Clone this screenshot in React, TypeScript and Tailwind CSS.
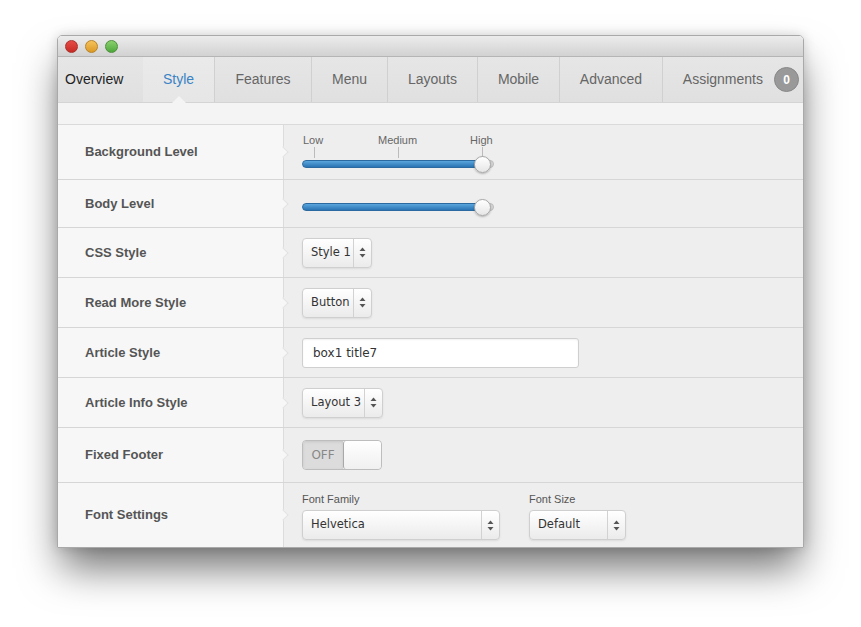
import React from "react";

const font = { fontFamily: '"Liberation Sans", Arial, Helvetica, sans-serif' };
const lucida = { fontFamily: '"DejaVu Sans", "Liberation Sans", sans-serif' };

const tabs = [
  { name: "Overview", w: "w-[85px]" },
  { name: "Style", w: "w-[71px]" },
  { name: "Features", w: "w-[97px]" },
  { name: "Menu", w: "w-[76px]" },
  { name: "Layouts", w: "w-[90px]" },
  { name: "Mobile", w: "w-[82px]" },
  { name: "Advanced", w: "w-[103px]" },
];

const Arrows = () => (
  <div className="flex w-[18px] self-stretch items-center justify-center border-l border-[#d2d2d2]">
    <svg width="7" height="11" viewBox="0 0 7 11">
      <path d="M3.5 0.5 L6.5 4 L0.5 4 Z" fill="#555" />
      <path d="M3.5 10.5 L6.5 7 L0.5 7 Z" fill="#555" />
    </svg>
  </div>
);

const Select = ({ value, w }: { value: string; w: string }) => (
  <div
    className={`flex items-center h-[30px] ${w} rounded-[4px] border border-[#cfcfcf] bg-gradient-to-b from-white to-[#ebebeb] shadow-[inset_0_1px_0_#fff,0_1px_2px_rgba(0,0,0,0.08)]`}
  >
    <span className="flex-1 pl-[8px] text-[11.5px] text-[#333]" style={lucida}>
      {value}
    </span>
    <Arrows />
  </div>
);

const Slider = ({ labels }: { labels?: boolean }) => (
  <div className="relative w-[192px] h-[16px]">
    {labels && (
      <>
        <span className="absolute left-[1px] top-[-24px] text-[11px] text-[#666]">Low</span>
        <span className="absolute left-[76px] top-[-24px] text-[11px] text-[#666]">Medium</span>
        <span className="absolute left-[168px] top-[-24px] text-[11px] text-[#666]">High</span>
        <span className="absolute left-[12px] top-[-9px] w-px h-[11px] bg-[#bbb]" />
        <span className="absolute left-[96px] top-[-9px] w-px h-[11px] bg-[#bbb]" />
        <span className="absolute left-[180px] top-[-9px] w-px h-[11px] bg-[#bbb]" />
      </>
    )}
    <div className="absolute left-[170px] right-0 top-[4px] h-[8px] rounded-full bg-[#d6d6d6] border border-[#bcbcbc]" />
    <div className="absolute left-0 w-[184px] top-[4px] h-[8px] rounded-full bg-gradient-to-b from-[#5aa6dd] to-[#2a74b4] border border-[#2a6aa0]" />
    <div className="absolute left-[172px] top-0 w-[17px] h-[17px] rounded-full bg-gradient-to-b from-white to-[#e6e6e6] border border-[#a8a8a8] shadow-[0_1px_2px_rgba(0,0,0,0.25)]" />
  </div>
);

const Notch = () => (
  <span className="absolute left-[-5px] top-1/2 -mt-[4px] w-[8px] h-[8px] rotate-45 bg-[#f7f7f7] border-t border-r border-[#e2e2e2]" />
);

const Row = ({
  label,
  h,
  align = "items-center",
  children,
}: {
  label: string;
  h: string;
  align?: string;
  children: React.ReactNode;
}) => (
  <div className={`flex ${h} border-b border-[#d6d6d6]`}>
    <div className="flex items-center w-[225px] pl-[27px] bg-[#f7f7f7] text-[13px] font-bold text-[#555]">
      {label}
    </div>
    <div className={`relative flex flex-1 ${align} pl-[18px] bg-[#eeeeee] border-l border-[#dcdcdc]`}>
      <Notch />
      {children}
    </div>
  </div>
);

export default function App() {
  return (
    <div className="min-h-[627px] bg-white pt-[35px] pl-[57px]" style={font}>
      <div className="w-[747px] h-[513px] flex flex-col overflow-hidden rounded-t-[5px] border border-[#a9a9a9] shadow-[0_24px_40px_-4px_rgba(0,0,0,0.55),0_0_12px_rgba(0,0,0,0.15)]">
        {/* title bar */}
        <div className="flex items-center gap-[7px] h-[21px] pl-[7px] bg-gradient-to-b from-[#ececec] to-[#d2d2d2] border-b border-[#b5b5b5]">
          <span className="w-[13px] h-[13px] rounded-full bg-gradient-to-b from-[#e54b45] to-[#c92a24] border border-[#a8312c]" />
          <span className="w-[13px] h-[13px] rounded-full bg-gradient-to-b from-[#f5c25a] to-[#dc9a21] border border-[#b88326]" />
          <span className="w-[13px] h-[13px] rounded-full bg-gradient-to-b from-[#8ad16f] to-[#4da83a] border border-[#4e8e3c]" />
        </div>
        {/* tabs */}
        <div className="flex h-[46px] bg-gradient-to-b from-[#e6e6e6] to-[#e0e0e0] border-b border-[#d4d4d4]">
          {tabs.map((t, i) => (
            <div
              key={t.name}
              className={`relative flex items-center ${t.w} text-[14px] ${
                i === 0 ? "pl-[7px] text-[#222]" : "justify-center"
              } ${i === 1 ? "text-[#3a83c4] bg-gradient-to-b from-[#eaeaea] to-[#e6e6e6]" : i > 1 ? "text-[#666]" : ""} ${
                i > 1 ? "border-l border-[#d0d0d0]" : ""
              }`}
            >
              {t.name}
              {i === 1 && (
                <span className="absolute bottom-[-1px] left-1/2 -ml-[7px] w-0 h-0 border-l-[7px] border-r-[7px] border-b-[7px] border-l-transparent border-r-transparent border-b-[#f4f4f4]" />
              )}
            </div>
          ))}
          <div className="flex flex-1 items-center justify-end gap-[11px] pr-[4px] border-l border-[#d0d0d0] text-[14px] text-[#666]">
            Assignments
            <span className="flex items-center justify-center w-[25px] h-[25px] rounded-full bg-[#999] border border-[#888] text-white text-[12px] font-bold">
              0
            </span>
          </div>
        </div>
        {/* band */}
        <div className="h-[22px] bg-[#f4f4f4] border-b border-[#dadada]" />
        {/* rows */}
        <Row label="Background Level" h="h-[55px]" align="items-start pt-[31px]">
          <Slider labels />
        </Row>
        <Row label="Body Level" h="h-[48px]" align="items-start pt-[19px]">
          <Slider />
        </Row>
        <Row label="CSS Style" h="h-[50px]">
          <Select value="Style 1" w="w-[70px]" />
        </Row>
        <Row label="Read More Style" h="h-[50px]">
          <Select value="Button" w="w-[70px]" />
        </Row>
        <Row label="Article Style" h="h-[50px]">
          <div
            className="flex items-center h-[30px] w-[277px] pl-[10px] rounded-[3px] border border-[#cfcfcf] bg-white text-[12px] text-[#333] shadow-[inset_0_1px_2px_rgba(0,0,0,0.06)]"
            style={lucida}
          >
            box1 title7
          </div>
        </Row>
        <Row label="Article Info Style" h="h-[50px]">
          <Select value="Layout 3" w="w-[81px]" />
        </Row>
        <Row label="Fixed Footer" h="h-[55px]">
          <div className="flex h-[30px] w-[80px] rounded-[4px] border border-[#bdbdbd] overflow-hidden">
            <div
              className="flex items-center justify-center w-[40px] bg-[#dcdcdc] text-[12px] text-[#888] shadow-[inset_0_1px_3px_rgba(0,0,0,0.1)]"
              style={lucida}
            >
              OFF
            </div>
            <div className="flex-1 rounded-[3px] border-l border-[#a8a8a8] bg-gradient-to-b from-white to-[#f0f0f0]" />
          </div>
        </Row>
        <div className="flex flex-1">
          <div className="flex items-center w-[225px] pl-[27px] bg-[#f7f7f7] text-[13px] font-bold text-[#555]">
            Font Settings
          </div>
          <div className="relative flex flex-1 items-end gap-[29px] pl-[18px] pb-[7px] bg-[#eeeeee] border-l border-[#dcdcdc]">
            <Notch />
            <div className="flex flex-col gap-[3px]">
              <span className="text-[11px] text-[#555]">Font Family</span>
              <Select value="Helvetica" w="w-[198px]" />
            </div>
            <div className="flex flex-col gap-[3px]">
              <span className="text-[11px] text-[#555]">Font Size</span>
              <Select value="Default" w="w-[97px]" />
            </div>
          </div>
        </div>
      </div>
    </div>
  );
}
